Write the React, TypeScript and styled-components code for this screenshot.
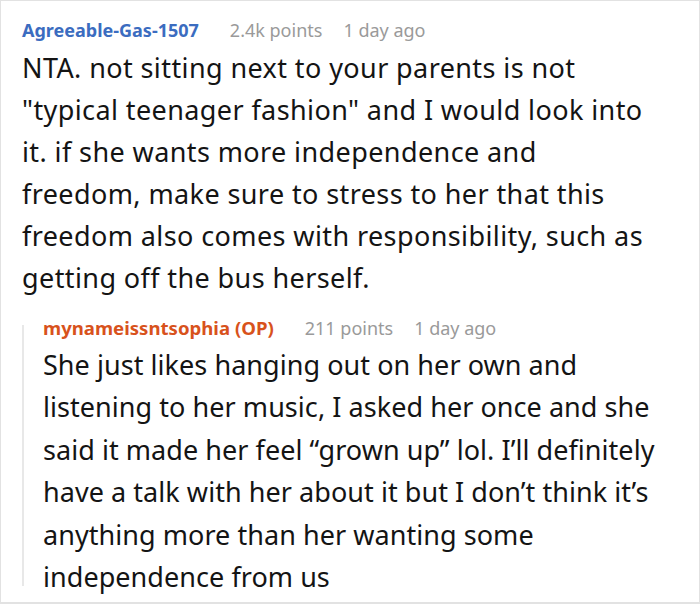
import React from "react";
import styled, { createGlobalStyle } from "styled-components";

const GlobalStyle = createGlobalStyle`
  html, body {
    margin: 0;
    padding: 0;
    background: #ffffff;
  }
  * {
    box-sizing: border-box;
  }
`;

const Frame = styled.div`
  width: 700px;
  height: 604px;
  overflow: hidden;
  border: 1px solid #e2e2e2;
  border-bottom-width: 2px;
  background: #fff;
  padding: 17px 0 0 21px;
  font-family: "Noto Sans", "Open Sans", sans-serif;
`;

const Comment = styled.div`
  display: flex;
  flex-direction: column;
`;

const Reply = styled.div`
  display: flex;
  gap: 19px;
  margin-top: 17px;
`;

const ThreadLine = styled.div`
  flex: 0 0 2px;
  background: #e8e8e8;
  margin: 9px 0 12px;
`;

const Header = styled.div`
  display: flex;
  align-items: baseline;
  font-size: 18px;
  line-height: 24px;
  white-space: nowrap;
`;

const Author = styled.span<{ $op?: boolean }>`
  font-weight: 700;
  font-size: ${(p) => (p.$op ? "18.6px" : "18px")};
  color: ${(p) => (p.$op ? "#d8521c" : "#3b6cc0")};
  margin-right: 31px;
`;

const Meta = styled.span`
  color: #9a9a9a;
  margin-right: 21px;
`;

const Body = styled.p<{ $wide?: boolean }>`
  margin: ${(p) => (p.$wide ? "4.6px" : "4.3px")} 0 0;
  font-size: 27px;
  letter-spacing: ${(p) => (p.$wide ? "0.4px" : "0.05px")};
  line-height: ${(p) => (p.$wide ? "42px" : "42.4px")};
  color: #141414;
  white-space: nowrap;
`;

const Line = styled.span`
  display: block;
`;

interface CommentData {
  author: string;
  op?: boolean;
  points: string;
  age: string;
  lines: string[];
}

const parent: CommentData = {
  author: "Agreeable-Gas-1507",
  points: "2.4k points",
  age: "1 day ago",
  lines: [
    "NTA. not sitting next to your parents is not",
    '"typical teenager fashion" and I would look into',
    "it. if she wants more independence and",
    "freedom, make sure to stress to her that this",
    "freedom also comes with responsibility, such as",
    "getting off the bus herself.",
  ],
};

const reply: CommentData = {
  author: "mynameissntsophia (OP)",
  op: true,
  points: "211 points",
  age: "1 day ago",
  lines: [
    "She just likes hanging out on her own and",
    "listening to her music, I asked her once and she",
    "said it made her feel \u201cgrown up\u201d lol. I\u2019ll definitely",
    "have a talk with her about it but I don\u2019t think it\u2019s",
    "anything more than her wanting some",
    "independence from us",
  ],
};

const CommentHead: React.FC<{ c: CommentData }> = ({ c }) => (
  <Header>
    <Author $op={c.op}>{c.author}</Author>
    <Meta>{c.points}</Meta>
    <Meta>{c.age}</Meta>
  </Header>
);

const CommentText: React.FC<{ c: CommentData; wide?: boolean }> = ({ c, wide }) => (
  <Body $wide={wide}>
    {c.lines.map((l, i) => (
      <Line key={i}>{l}</Line>
    ))}
  </Body>
);

const App: React.FC = () => {
  return (
    <>
      <GlobalStyle />
      <Frame>
        <Comment>
          <CommentHead c={parent} />
          <CommentText c={parent} wide />
        </Comment>
        <Reply>
          <ThreadLine />
          <Comment>
            <CommentHead c={reply} />
            <CommentText c={reply} />
          </Comment>
        </Reply>
      </Frame>
    </>
  );
};

export default App;
